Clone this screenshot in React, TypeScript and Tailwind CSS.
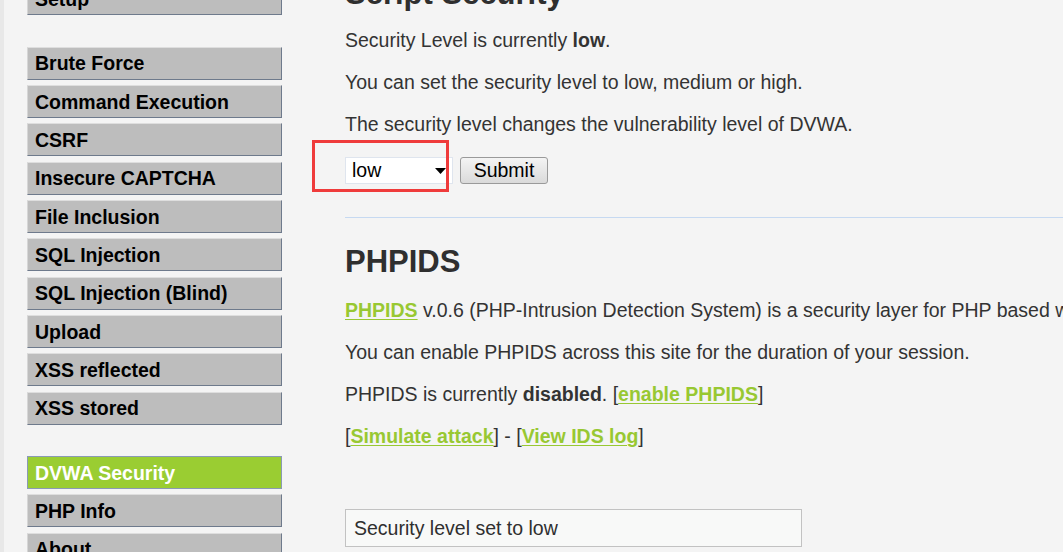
import React from "react";

const menuTop = ["Brute Force", "Command Execution", "CSRF", "Insecure CAPTCHA", "File Inclusion", "SQL Injection", "SQL Injection (Blind)", "Upload", "XSS reflected", "XSS stored"];

function Item({ label, active = false }: { label: string; active?: boolean }) {
  return (
    <div
      className={
        active
          ? "h-[33px] w-[255px] mb-[5.35px] border border-[#8a9ab4] bg-[#9acd32] pl-[7px] pt-[4.5px] text-[19.5px] leading-[22px] font-bold text-white"
          : "h-[33px] w-[255px] mb-[5.35px] border border-t-[#dedede] border-l-[#d6d6d6] border-r-[#6e7a8c] border-b-[#6e7a8c] bg-[#bdbdbd] pl-[7px] pt-[4.5px] text-[19.5px] leading-[22px] font-bold text-black"
      }
    >
      {label}
    </div>
  );
}

function Link({ children }: { children: React.ReactNode }) {
  return <a className="font-bold text-[#98c832] underline underline-offset-[2px]">{children}</a>;
}

export default function App() {
  return (
    <div
      className="relative flex h-[552px] w-[1063px] overflow-hidden bg-[#f4f4f4] text-[#333]"
      style={{ fontFamily: '"Liberation Sans", Arial, sans-serif' }}
    >
      <div className="w-[4px] shrink-0 bg-[#e8e8e8]" />
      <div className="ml-[23px] mt-[-17.7px] w-[255px] shrink-0">
        <Item label="Setup" />
        <div className="h-[26px]" />
        {menuTop.map((m) => (
          <Item key={m} label={m} />
        ))}
        <div className="h-[26px]" />
        <Item label="DVWA Security" active />
        <Item label="PHP Info" />
        <Item label="About" />
      </div>
      <div className="ml-[63px] w-[900px] shrink-0 text-[19.5px] leading-[22px]">
        <h2 className="mt-[-25px] mb-[15.6px] text-[31px] leading-[38px] font-bold text-[#2f2f2f]">Script Security</h2>
        <p className="mb-[20.3px]">
          Security Level is currently <b>low</b>.
        </p>
        <p className="mb-[20.3px]">You can set the security level to low, medium or high.</p>
        <p className="mb-[21.5px]">The security level changes the vulnerability level of DVWA.</p>
        <div className="flex h-[27px] items-center gap-[7px]">
          <div className="relative flex h-[27px] w-[108px] items-center border border-[#dfe5ee] bg-white pl-[6px] text-black">
            low
            <svg className="absolute left-[89px] top-[10px]" width="11" height="6" viewBox="0 0 11 6">
              <path d="M0 0 L11 0 L5.5 6 Z" fill="#000" />
            </svg>
          </div>
          <div className="flex h-[27px] w-[88px] items-center justify-center rounded-[3px] border border-[#9a9a9a] bg-gradient-to-b from-[#f4f4f4] to-[#dadada] text-black">
            Submit
          </div>
        </div>
        <div className="mt-[33px] h-px w-full bg-[#c6d9f1]" />
        <h2 className="mt-[25.3px] mb-[17.6px] text-[31px] leading-[38px] font-bold text-[#2f2f2f]">PHPIDS</h2>
        <p className="mb-[20.3px] whitespace-nowrap">
          <Link>PHPIDS</Link> v.0.6 (PHP-Intrusion Detection System) is a security layer for PHP based web applications.
        </p>
        <p className="mb-[20.3px]">You can enable PHPIDS across this site for the duration of your session.</p>
        <p className="mb-[20.3px]">
          PHPIDS is currently <b>disabled</b>. [<Link>enable PHPIDS</Link>]
        </p>
        <p>
          [<Link>Simulate attack</Link>] - [<Link>View IDS log</Link>]
        </p>
        <div className="mt-[61.5px] h-[38px] w-[457px] border border-[#c2c2c2] bg-[#f8f9f8] pl-[8px] pt-[7px] text-[#2f2f2f]">
          Security level set to low
        </div>
      </div>
      <div className="absolute left-[312px] top-[140px] h-[52px] w-[137px] border-[3px] border-[#ef3b3b]" />
    </div>
  );
}
